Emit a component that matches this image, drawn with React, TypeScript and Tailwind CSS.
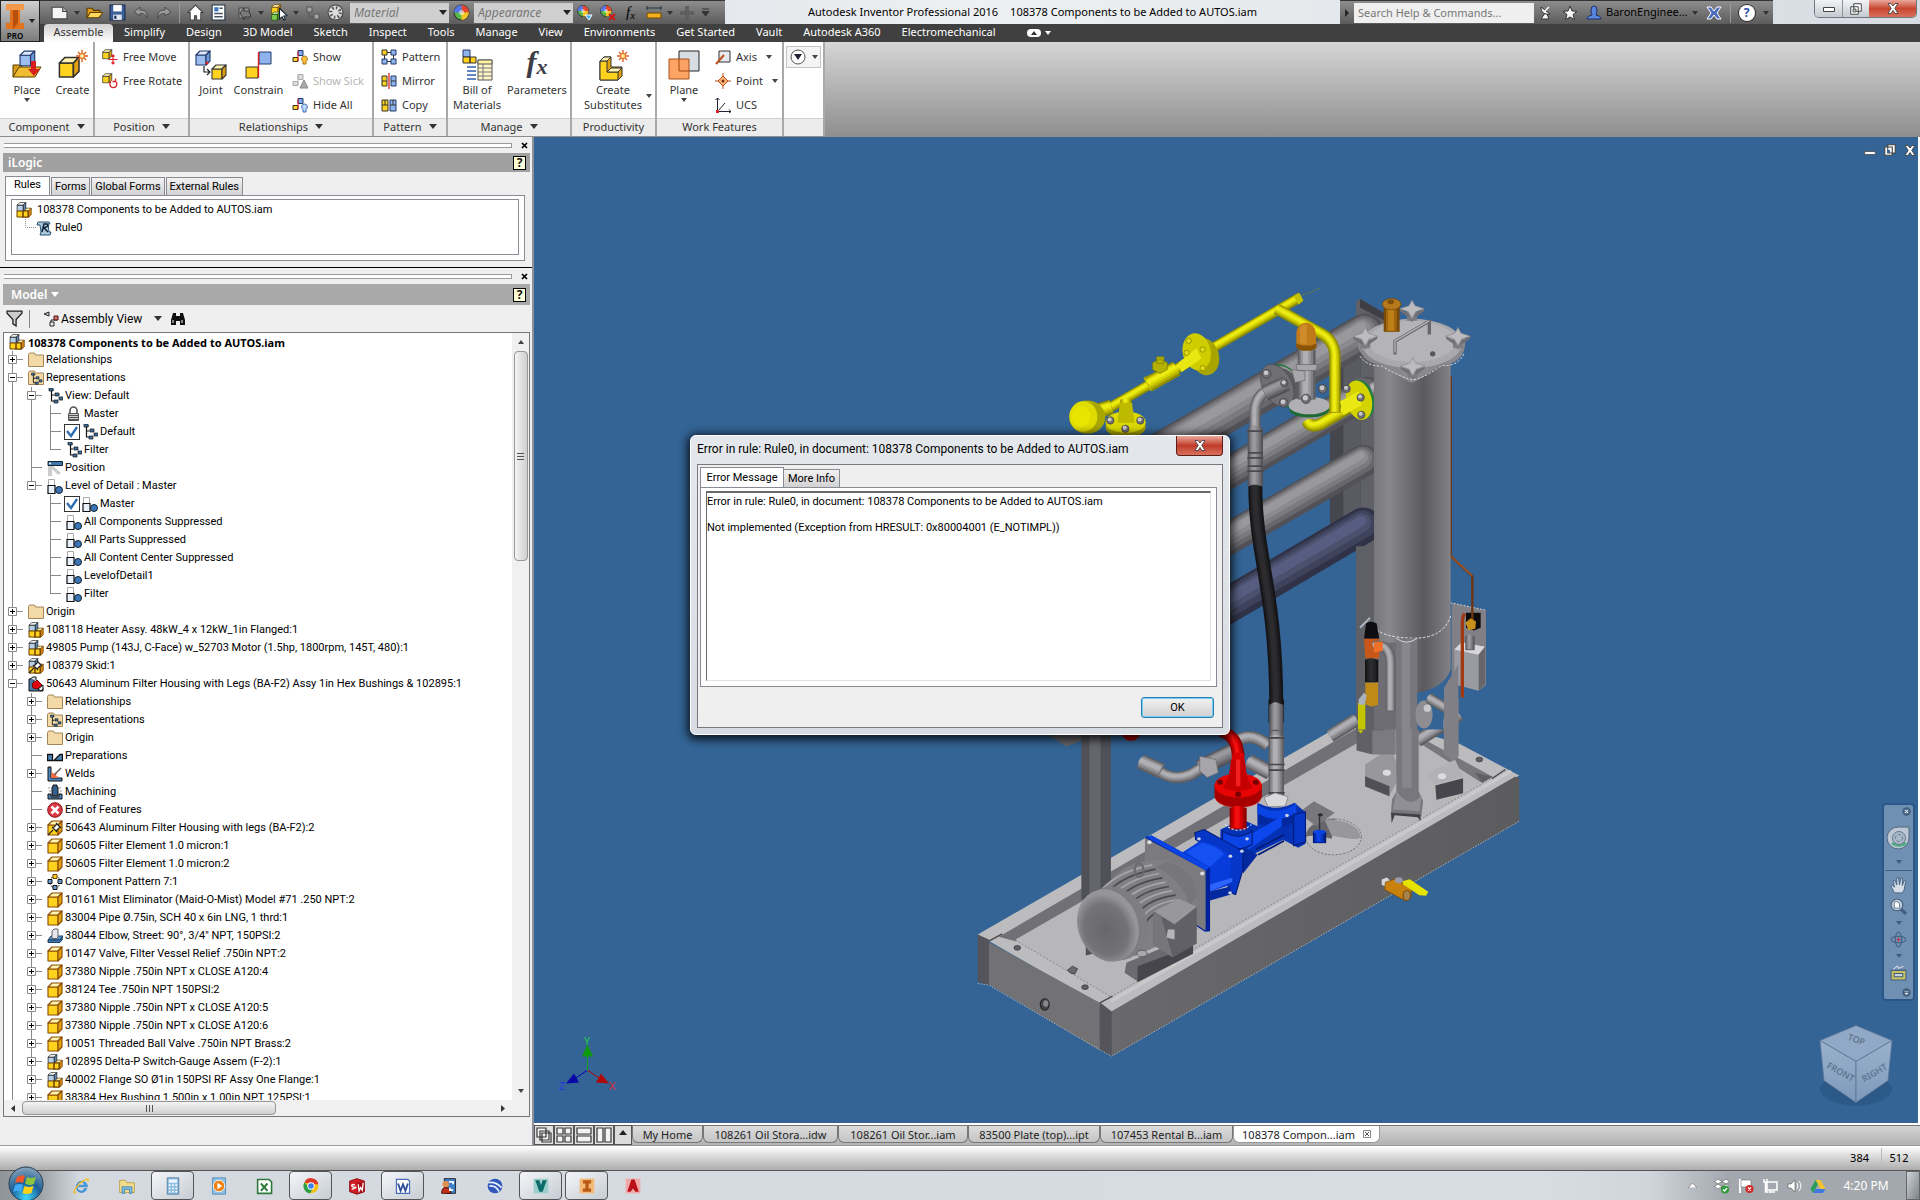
import React from "react";

type Kids = { children?: React.ReactNode };

/* ---------- small drawing helpers ---------- */

function Ic({ s = 16, h, vb, children }: { s?: number; h?: number; vb?: string } & Kids) {
  return (
    <svg width={s} height={h ?? s} viewBox={vb ?? "0 0 16 16"} className="shrink-0" aria-hidden="true">
      {children}
    </svg>
  );
}

const Caret = ({ c = "#444" }: { c?: string }) => (
  <Ic s={6} h={4} vb="0 0 6 4"><path d="M0 0h6L3 4z" fill={c} /></Ic>
);
const BigCaret = ({ c = "#333" }: { c?: string }) => (
  <Ic s={8} h={5} vb="0 0 8 5"><path d="M0 0h8L4 5z" fill={c} /></Ic>
);

function Cube({ x = 0, y = 0, k = 1, f = "#ffd21e", t = "#fff3b0", r = "#e0a010", o = "#6b3f00" }) {
  return (
    <g transform={`translate(${x} ${y}) scale(${k})`} stroke={o} strokeWidth={1.1} strokeLinejoin="round">
      <path d="M1 5h10v10H1z" fill={f} />
      <path d="M1 5l4-4h10l-4 4z" fill={t} />
      <path d="M11 5l4-4v10l-4 4z" fill={r} />
    </g>
  );
}
const BLUE = { f: "#9dbdf0", t: "#dbe8fb", r: "#6f96d6", o: "#223a6b" };

const PartIcon = () => <Ic><Cube o="#8a4a00" /></Ic>;
const AsmArt = () => (
  <>
    <Cube x={5.5} y={5.5} k={0.65} f="#ffc41e" r="#d98a10" />
    <Cube x={0.5} y={0} k={0.62} f="#b7cfe6" t="#fff" r="#5d88b5" o="#111" />
    <path d="M1 9h6v6H1zM7 9h5v6H7z" fill="#ffd21e" stroke="#6b3f00" />
  </>
);
const AsmIcon = () => <Ic><AsmArt /></Ic>;
const Pin = () => <path d="M1 15l5-5M5 7l5 5M6 8l4-4 3 3-4 4zM9 3l5 5" stroke="#222" fill="#fff" strokeWidth={1.1} />;
const AsmPinIcon = () => <Ic><AsmArt /><Pin /></Ic>;
const PartPinIcon = () => <Ic><Cube o="#8a4a00" /><Pin /></Ic>;
const WeldAsmIcon = () => (
  <Ic>
    <path d="M1 3h5v9h9v3H1z" fill="#4d7ba8" stroke="#111" />
    <path d="M2 3l3-2h3v3" fill="#dce8f4" stroke="#111" />
    <path d="M4 8l5-4 5 5-4 4-5-1z" fill="#e00010" stroke="#700" />
    <path d="M10 13l5-4v4l-2 2z" fill="#e8eef4" stroke="#111" />
  </Ic>
);
const FolderArt = () => (
  <path d="M.5 14.5v-12l1-1.500h5l1 2h8v11.500z" fill="#f3d9a6" stroke="#a3855a" strokeLinejoin="round" />
);
const RepArt = () => (
  <>
    <path d="M3 2h4M4.500 2v11h3M4.500 7h3" stroke="#111" fill="none" strokeWidth={1.2} />
    <path d="M2 0h4v3H2zM8 5h4v3H8zM12 9h4v3h-4zM7 12h4v3H7z" fill="#3f6f9f" stroke="#111" strokeWidth={0.7} />
  </>
);
const FolderIcon = () => <Ic><FolderArt /></Ic>;
const RepFolderIcon = () => <Ic><FolderArt /><g transform="translate(2 3) scale(.75)"><RepArt /></g></Ic>;
const ViewIcon = () => <Ic><RepArt /></Ic>;
const LockIcon = () => (
  <Ic>
    <path d="M4 8V4.500a3.500 3.500 0 0 1 7 0V8" fill="none" stroke="#555" strokeWidth={1.6} />
    <path d="M2.500 7.500h10v7h-10zM3 9.500h9M3 11.500h9M3 13.500h9" fill="#ccc" stroke="#555" />
  </Ic>
);
const PositionIcon = () => (
  <Ic>
    <path d="M1 5h4v11H1zM5 5l9 8-3 2-8-8z" fill="#ccc" />
    <path d="M1 1.500h14.500v4H1z" fill="#3f77ad" stroke="#123" />
    <circle cx="3" cy="3.500" r="1" fill="#fff" />
  </Ic>
);
const LodIcon = () => (
  <Ic>
    <path d="M1.500 1.500h6v6h-6z" fill="#fff" stroke="#aaa" />
    <path d="M1 7.500h7v8H1z" fill="#e9f1fa" stroke="#111" strokeWidth={1.2} />
    <circle cx="12" cy="12" r="3.500" fill="#3c76b4" stroke="#123" />
  </Ic>
);
const PrepIcon = () => <Ic><path d="M.5 6.500h5v6h-5zM7 12.500l6-6h2.500v6z" fill="#4d86bd" stroke="#111" strokeWidth={1.3} /></Ic>;
const WeldsIcon = () => (
  <Ic>
    <path d="M1 1h3v11h11v3H1z" fill="#4d86bd" stroke="#111" />
    <path d="M4 12l1-6 2 2 3-1-1 3 3 1-4 1z" fill="#ff6a3c" />
    <path d="M7 9l7-7" stroke="#666" strokeWidth={1.6} />
  </Ic>
);
const MachIcon = () => (
  <Ic>
    <path d="M1 10h3v3h8v-3h3v5H1z" fill="#4d86bd" stroke="#111" />
    <path d="M6 1h4v2h1v9H5V3h1z" fill="#345f8a" stroke="#111" />
    <path d="M1 4h2M2 7h2M12 4h2M13 7h2" stroke="#999" />
  </Ic>
);
const EndIcon = () => (
  <Ic>
    <circle cx="8" cy="8" r="7.300" fill="#dc3a44" stroke="#8a1018" />
    <path d="M4.500 4.500l7 7M11.500 4.500l-7 7" stroke="#fff" strokeWidth={2.6} />
  </Ic>
);
const PatternIcon = () => (
  <Ic>
    <circle cx="8" cy="8" r="5.500" fill="none" stroke="#111" strokeDasharray="2 1.500" />
    <path d="M1 5.500h4v4H1zM11 5.500h4v4h-4zM6 11.500h4v4H6z" fill="#6c9bd0" stroke="#111" />
    <path d="M6 .5h4v4H6z" fill="#ffd21e" stroke="#6b3f00" />
  </Ic>
);
const ElbowIcon = () => (
  <Ic>
    <path d="M1 12l3-4h12l-3 4z" fill="#5b93c8" stroke="#1d4568" />
    <path d="M1 12v2.500h12l3-4V8l-3 4z" fill="#3f78b0" stroke="#1d4568" />
    <path d="M5 3l2-2h4v8l-1 1.500H5z" fill="#e3e7ec" stroke="#666" />
  </Ic>
);
const RuleIcon = () => (
  <Ic>
    <path d="M2 2h11l1 2h-2l1 8h2l-1 3H4l1-3L4 5H1z" fill="#a9c8dd" stroke="#2c5570" />
    <path d="M6 12l2-8h3l1 2-4 2 4 4" fill="none" stroke="#123" strokeWidth={1.5} />
  </Ic>
);

/* ---------- model browser tree ---------- */

type Row = [guides: string, icon: () => React.JSX.Element, label: string, checked?: boolean];

const TREE: Row[] = [
  ["+", FolderIcon, "Relationships"],
  ["-", RepFolderIcon, "Representations"],
  ["v-", ViewIcon, "View: Default"],
  ["vvt", LockIcon, "Master"],
  ["vvt", ViewIcon, "Default", true],
  ["vvl", ViewIcon, "Filter"],
  ["vt", PositionIcon, "Position"],
  ["ve", LodIcon, "Level of Detail : Master"],
  ["v t", LodIcon, "Master", true],
  ["v t", LodIcon, "All Components Suppressed"],
  ["v t", LodIcon, "All Parts Suppressed"],
  ["v t", LodIcon, "All Content Center Suppressed"],
  ["v t", LodIcon, "LevelofDetail1"],
  ["v l", LodIcon, "Filter"],
  ["+", FolderIcon, "Origin"],
  ["+", AsmIcon, "108118 Heater Assy. 48kW_4 x 12kW_1in Flanged:1"],
  ["+", AsmIcon, "49805 Pump (143J, C-Face) w_52703 Motor (1.5hp, 1800rpm, 145T, 480):1"],
  ["+", AsmPinIcon, "108379 Skid:1"],
  ["-", WeldAsmIcon, "50643 Aluminum Filter Housing with Legs (BA-F2) Assy 1in Hex Bushings & 102895:1"],
  ["v+", FolderIcon, "Relationships"],
  ["v+", RepFolderIcon, "Representations"],
  ["v+", FolderIcon, "Origin"],
  ["vt", PrepIcon, "Preparations"],
  ["v+", WeldsIcon, "Welds"],
  ["vt", MachIcon, "Machining"],
  ["vt", EndIcon, "End of Features"],
  ["v+", PartPinIcon, "50643 Aluminum Filter Housing with legs (BA-F2):2"],
  ["v+", PartIcon, "50605 Filter Element 1.0 micron:1"],
  ["v+", PartIcon, "50605 Filter Element 1.0 micron:2"],
  ["v+", PatternIcon, "Component Pattern 7:1"],
  ["v+", PartIcon, "10161 Mist Eliminator (Maid-O-Mist) Model #71 .250 NPT:2"],
  ["v+", PartIcon, "83004 Pipe Ø.75in, SCH 40 x 6in LNG, 1 thrd:1"],
  ["v+", ElbowIcon, "38044 Elbow, Street: 90°, 3/4\" NPT, 150PSI:2"],
  ["v+", PartIcon, "10147 Valve, Filter Vessel Relief .750in NPT:2"],
  ["v+", PartIcon, "37380 Nipple .750in NPT x CLOSE A120:4"],
  ["v+", PartIcon, "38124 Tee .750in NPT 150PSI:2"],
  ["v+", PartIcon, "37380 Nipple .750in NPT x CLOSE A120:5"],
  ["v+", PartIcon, "37380 Nipple .750in NPT x CLOSE A120:6"],
  ["v+", PartIcon, "10051 Threaded Ball Valve .750in NPT Brass:2"],
  ["v+", AsmIcon, "102895 Delta-P Switch-Gauge Assem (F-2):1"],
  ["v+", AsmIcon, "40002 Flange SO Ø1in 150PSI RF Assy One Flange:1"],
  ["v+", PartIcon, "38384 Hex Bushing 1.500in x 1.00in NPT 125PSI:1"],
];

function Guide({ k }: { k: string }) {
  const box = k === "+" || k === "-" || k === "e";
  const half = k === "l" || k === "e";
  return (
    <Ic s={19} h={18} vb="0 0 19 18">
      <g stroke="#8a8a8a" fill="none">
        {k !== " " && <path d={half ? "M8.500 0v9" : "M8.500 0v18"} />}
        {k !== " " && k !== "v" && <path d="M8.500 8.500H19" />}
        {box && <path d="M4.500 4.500h8v8h-8z" fill="#fff" />}
      </g>
      {box && <path d={k === "+" ? "M6 8.500h5M8.500 6v5" : "M6 8.500h5"} stroke="#000" />}
    </Ic>
  );
}

function TreeRow({ row }: { row: Row }) {
  const [guides, Icon, label, checked] = row;
  return (
    <li className="flex h-[18px] items-center whitespace-nowrap">
      {guides.split("").map((k, i) => <Guide key={i} k={k} />)}
      {checked ? (
        <label className="ml-[3px] flex items-center gap-0.5">
          <span className="relative flex">
            <input type="checkbox" defaultChecked className="peer size-4 appearance-none border border-[#333] bg-white" />
            <svg viewBox="0 0 16 16" className="pointer-events-none absolute inset-0 hidden size-4 peer-checked:block" aria-hidden="true">
              <path d="M3 7l4 5 6-9" fill="none" stroke="#2f6db5" strokeWidth={2.4} />
            </svg>
          </span>
          <Icon />
          {label}
        </label>
      ) : (
        <span className="ml-[5px] flex items-center gap-0.5"><Icon />{label}</span>
      )}
    </li>
  );
}

/* ---------- title bar ---------- */

function Ball({ x = 8, y = 8, r = 7 }) {
  return (
    <g transform={`translate(${x} ${y})`}>
      <circle r={r} fill="#58b947" stroke="#333" />
      <path d={`M0 0V${-r}A${r} ${r} 0 0 1 ${r} 0z`} fill="#e8452f" />
      <path d={`M0 0H${r}A${r} ${r} 0 0 1 0 ${r}z`} fill="#f3c623" />
      <path d={`M0 0V${-r}A${r} ${r} 0 0 0 ${-r} 0z`} fill="#5577e8" />
      <circle r={r * 0.35} fill="#fff" opacity=".55" />
    </g>
  );
}

function QBtn({ label, w = "w-[23px]", children }: { label: string; w?: string } & Kids) {
  return <button aria-label={label} className={`flex h-full shrink-0 items-center justify-center ${w}`}>{children}</button>;
}

function Combo({ label }: { label: string }) {
  return (
    <div className="relative flex h-5 w-[99px] shrink-0">
      <select aria-label={label} className="h-full w-full appearance-none bg-[#cfcfcf] pl-1 font-['Noto_Sans'] text-[12px] text-[#777] italic">
        <option>{label}</option>
      </select>
      <span className="pointer-events-none absolute inset-y-0 right-0.5 flex items-center"><BigCaret c="#222" /></span>
    </div>
  );
}

function TitleBar() {
  return (
    <header className="flex h-6 items-stretch bg-gradient-to-r from-[#cdd3dc] via-[#eef0f2] to-[#d6dce2]">
      <div className="flex w-[685px] shrink-0 items-center border-t border-[#333] bg-gradient-to-b from-[#8d8d8d] to-[#5c5c5c] pl-2">
        <QBtn label="New"><Ic s={17}><path d="M1 3h10l4 4v7H1z" fill="#f4f4f4" stroke="#444" /><path d="M11 3v4h4" fill="#bbb" stroke="#444" /></Ic></QBtn>
        <QBtn label="New options" w="w-[12px]"><Caret c="#333" /></QBtn>
        <QBtn label="Open"><Ic s={17}><path d="M1 13V4h5l1 2h6v2" fill="#d99a1a" stroke="#5d3d00" /><path d="M1 13l3-5h12l-4 5z" fill="#ffd75a" stroke="#5d3d00" /></Ic></QBtn>
        <QBtn label="Save"><Ic s={17}><path d="M1 1h14v14H1z" fill="#3c5f99" stroke="#152a50" /><path d="M4 1h8v6H4z" fill="#fff" /><path d="M4 10h8v5H4z" fill="#dfe6f0" /><path d="M5 11h2v3H5z" fill="#152a50" /></Ic></QBtn>
        <QBtn label="Undo"><Ic><path d="M7 2L1 7l6 4V8.500c4 0 6 1 7 4.500 1-6-2-8-7-8z" fill="#9a9a9a" stroke="#4a4a4a" /></Ic></QBtn>
        <QBtn label="Redo"><Ic><path d="M9 2l6 5-6 4V8.500c-4 0-6 1-7 4.500-1-6 2-8 7-8z" fill="#9a9a9a" stroke="#4a4a4a" /></Ic></QBtn>
        <span className="mx-1 h-5 w-px bg-[#999]" />
        <QBtn label="Home"><Ic s={17}><path d="M8 1l7 7h-2v7H9v-4H7v4H3V8H1z" fill="#fff" stroke="#444" /></Ic></QBtn>
        <QBtn label="iProperties"><Ic s={17}><path d="M2 1h12v14H2z" fill="#fff" stroke="#234" /><path d="M4 3h4v4H4z" fill="#3f77c0" /><path d="M4 9h8M4 12h8M9 4h3" stroke="#456" strokeWidth={1.4} /></Ic></QBtn>
        <span className="w-[3px]" />
        <QBtn label="Update"><Ic><path d="M2 3h10v10H2z" fill="#9b9b9b" stroke="#444" /><path d="M3 8l4-5v3h5l2 6h-7v3z" fill="#7b7b7b" stroke="#3a3a3a" /></Ic></QBtn>
        <QBtn label="Update options" w="w-[10px]"><Caret c="#333" /></QBtn>
        <span className="w-0.5" />
        <QBtn label="Select"><Ic s={17}><Cube k={0.6} /><Cube x={0} y={7} k={0.55} f="#7ec850" t="#c8efac" r="#4d9628" o="#1c4a08" /><path d="M8 4l7 7-3 .3 1.500 3-1.500.7-1.500-3L8 14z" fill="#fff" stroke="#123" /></Ic></QBtn>
        <QBtn label="Select options" w="w-[10px]"><Caret c="#333" /></QBtn>
        <QBtn label="Switch"><Ic><path d="M2 2h5v5H2zM9 9h5v5H9z" fill="#a5a5a5" stroke="#555" /><path d="M4 8v4h4" stroke="#555" fill="none" /></Ic></QBtn>
        <QBtn label="Render"><Ic s={17}><circle cx="8" cy="8" r="7" fill="#ddd" stroke="#444" /><circle cx="8" cy="8" r="4.500" fill="none" stroke="#555" strokeWidth={3} strokeDasharray="1.500 2" /></Ic></QBtn>
        <span className="w-[3px]" />
        <Combo label="Material" />
        <QBtn label="Appearance colour wheel" w="w-[25px]"><Ic s={17}><Ball /></Ic></QBtn>
        <Combo label="Appearance" />
        <QBtn label="Adjust"><Ic><Ball x={6} y={6} r={5.5} /><path d="M8 10h7l-3 5z" fill="#3fb0f0" stroke="#fff" /></Ic></QBtn>
        <QBtn label="Clear"><Ic><Ball x={6} y={6} r={5.5} /><path d="M9 9l6 6M15 9l-6 6" stroke="#d01818" strokeWidth={2} /></Ic></QBtn>
        <QBtn label="Parameters"><span className="flex items-center font-['Liberation_Serif'] text-[15px] leading-none text-black italic">f<span className="pt-1.5 text-[11px]">x</span></span></QBtn>
        <QBtn label="Measure"><Ic><path d="M1 3h14M1 1v4M15 1v4" stroke="#234" /><path d="M1 8h14v5H1z" fill="#f0b020" stroke="#704800" /></Ic></QBtn>
        <QBtn label="Measure options" w="w-[10px]"><Caret c="#333" /></QBtn>
        <QBtn label="Add"><Ic><path d="M6 1h4v5h5v4h-5v5H6v-5H1V6h5z" fill="#5f5f5f" /></Ic></QBtn>
        <QBtn label="Customize" w="w-[14px]"><Ic s={9} h={9} vb="0 0 9 9"><path d="M1 1h7M1 3.500h7L4.500 8z" fill="#333" stroke="#333" /></Ic></QBtn>
      </div>
      <h1 className="flex min-w-0 flex-1 items-center justify-center gap-3 overflow-hidden text-[11px] font-normal whitespace-nowrap text-black">
        <span>Autodesk Inventor Professional 2016</span>
        <span>108378 Components to be Added to AUTOS.iam</span>
      </h1>
      <div className="flex w-[433px] shrink-0 items-center border-t border-[#333] bg-gradient-to-b from-[#8d8d8d] to-[#5c5c5c]">
        <QBtn label="Expand search" w="w-[14px]"><Ic s={4} h={8} vb="0 0 4 8"><path d="M0 0l4 4-4 4z" fill="#222" /></Ic></QBtn>
        <input aria-label="Search Help and Commands" placeholder="Search Help & Commands..." className="h-5 w-[180px] bg-[#efefef] px-1 text-[11px] placeholder:text-[#777]" />
        <QBtn label="Communication Center" w="w-[24px]"><Ic><path d="M3 2c0 5 3 8 9 7zM7 8l-4 6h8l-2-5" fill="#f6f6f6" stroke="#333" /><path d="M7 6l4-4" stroke="#fff" strokeWidth={1.5} /></Ic></QBtn>
        <QBtn label="Favorites"><Ic><path d="M8 1l2 5 5 .3-4 3.300 1.500 5L8 12l-4.500 2.600L5 9.600 1 6.300 6 6z" fill="#f6f6f6" stroke="#333" /></Ic></QBtn>
        <button className="flex items-center gap-1 pl-[5px] text-[11px] text-black">
          <Ic><path d="M5 5a3 4 0 0 1 6 0c0 3-1 4-1 5 3 1 5 1.500 5 4H1c0-2.500 2-3 5-4 0-1-1-2-1-5z" fill="#5b86e0" stroke="#1b2f66" /></Ic>
          BaronEnginee...
          <Caret c="#333" />
        </button>
        <QBtn label="Exchange" w="w-[32px]"><Ic><path d="M1 2h4l3 4 3-4h4l-4 6 4 6h-4l-3-4-3 4H1l4-6z" fill="#4c6cc0" stroke="#fff" /></Ic></QBtn>
        <span className="h-5 w-px bg-[#999]" />
        <QBtn label="Help" w="w-[32px]">
          <span className="flex size-4 items-center justify-center rounded-full bg-white text-[12px] leading-none font-bold text-[#2a4fa8] ring-1 ring-[#333]">?</span>
        </QBtn>
        <Caret c="#333" />
      </div>
      <div className="flex shrink-0 items-start pr-[3px] pl-[41px]">
        <div className="flex h-[18px] overflow-hidden rounded-b-[5px] border border-t-0 border-[#6f7780]">
          <button aria-label="Minimize" className="flex w-7 items-center justify-center border-r border-[#8c949c] bg-gradient-to-b from-[#f2f4f6] to-[#c4cad1]"><Ic s={12} h={6} vb="0 0 12 6"><path d="M.5 1.500h11v4H.5z" fill="#fff" stroke="#444" /></Ic></button>
          <button aria-label="Restore" className="flex w-[26px] items-center justify-center bg-gradient-to-b from-[#f2f4f6] to-[#c4cad1]"><Ic s={12}><path d="M5 1h10v10H5zM1 5h10v10H1z" fill="#fff" stroke="#444" strokeWidth={1.3} /><path d="M4 8h4v4H4z" fill="#bbb" stroke="#444" /></Ic></button>
          <button aria-label="Close" className="flex w-[47px] items-center justify-center bg-gradient-to-b from-[#e9a79c] via-[#c8452f] to-[#d8705c]"><CloseX /></button>
        </div>
      </div>
    </header>
  );
}

const CloseX = () => (
  <Ic s={12} h={11} vb="0 0 12 11"><path d="M1 .5h3l2 2.500L8 .5h3L7.800 5.300 11 10.500H8L6 7.500l-2 3H1l3.200-5.200z" fill="#fff" stroke="#444" strokeWidth={0.9} /></Ic>
);

/* ---------- ribbon ---------- */

const TABS = ["Simplify", "Design", "3D Model", "Sketch", "Inspect", "Tools", "Manage", "View", "Environments", "Get Started", "Vault", "Autodesk A360", "Electromechanical"];

function Panel({ title, w, menu = true, children }: { title: string; w: string; menu?: boolean } & Kids) {
  return (
    <section className={`flex shrink-0 flex-col border-r-2 border-[#a9a9a9] bg-white ${w}`}>
      <div className="flex flex-1">{children}</div>
      <button className="flex h-[18px] items-center justify-center gap-[7px] border-t border-[#cfcfcf] bg-[#ececec] pb-0.5 text-[11px] leading-none text-[#333]">
        {title}
        {menu && <BigCaret />}
      </button>
    </section>
  );
}

function Big({ lines, icon, caret, w }: { lines: string[]; icon: React.ReactNode; caret?: boolean; w: string }) {
  return (
    <button className={`flex shrink-0 flex-col items-center pt-1.5 text-[11px] leading-[15px] whitespace-nowrap text-[#333] ${w}`}>
      <span className="flex h-[34px] items-center">{icon}</span>
      {lines.map((l) => <span key={l}>{l}</span>)}
      {caret && <span className="flex h-1.5 items-center"><Caret /></span>}
    </button>
  );
}

function Small({ label, icon, off, caret }: { label: string; icon: React.ReactNode; off?: boolean; caret?: boolean }) {
  return (
    <button disabled={off} className="flex h-6 items-center gap-[5px] text-[11px] whitespace-nowrap text-[#333] disabled:text-[#b5b5b5]">
      {icon}
      {label}
      {caret && <span className="pl-1"><Caret /></span>}
    </button>
  );
}
const Stack = ({ children }: Kids) => <div className="flex flex-col pt-[3px] pl-[7px]">{children}</div>;

const Spark = ({ x, y }: { x: number; y: number }) => (
  <g transform={`translate(${x} ${y})`}>
    <path d="M0-6V6M-6 0H6M-4-4l8 8M4-4l-8 8" stroke="#e0601a" strokeWidth={1.4} />
    <circle r="2.500" fill="#fff3a0" stroke="#e0601a" />
  </g>
);
const Pair = ({ off }: { off?: boolean }) => (
  <>
    <path d="M6 1.500h5v5H6z" fill={off ? "#ddd" : "#7fa8e8"} stroke={off ? "#aaa" : "#223a6b"} />
    <path d="M1 8.500h5v4H1z" fill={off ? "#ddd" : "#ffd21e"} stroke={off ? "#aaa" : "#333"} />
    <path d="M6 2v10" stroke={off ? "#bbb" : "#d22"} />
  </>
);
const Bulb = ({ c, o }: { c: string; o: string }) => <path d="M12.500 7a3 3 0 0 0-1.500 5.500V15h3v-2.500A3 3 0 0 0 12.500 7z" fill={c} stroke={o} />;

function Ribbon() {
  return (
    <div className="flex h-[95px] border-b border-[#8d8d8d] bg-gradient-to-b from-[#d6d6d6] to-[#8f8f8f]">
      <Panel title="Component" w="w-[95px]">
        <Big w="w-[54px]" lines={["Place"]} caret icon={<Ic s={32} vb="0 0 32 32"><path d="M2 28V16h8l2 3" fill="#d99a1a" stroke="#5d3d00" /><Cube x={8} y={1} k={1.05} {...BLUE} /><path d="M2 28l6-10h22l-6 10z" fill="#f0bd32" stroke="#5d3d00" /><path d="M20 12h5v8h4l-6 7-6-7h3z" fill="#d81e1e" /></Ic>} />
        <Big w="w-[37px]" lines={["Create"]} icon={<Ic s={32} vb="0 0 32 32"><Cube x={1} y={7} k={1.4} o="#333" /><Spark x={25} y={7} /></Ic>} />
      </Panel>
      <Panel title="Position" w="w-[95px]">
        <Stack>
          <Small label="Free Move" icon={<Ic><Cube k={0.65} o="#333" /><path d="M11 6v9M6.500 10.500h9M9.500 7.500L11 6l1.500 1.500M9.500 13.500L11 15l1.500-1.500" fill="none" stroke="#d22" strokeWidth={1.2} /></Ic>} />
          <Small label="Free Rotate" icon={<Ic><Cube k={0.65} o="#333" /><path d="M9 8.500a3.500 3.500 0 1 0 4-.5M13.500 5.500V8.500h-3" fill="none" stroke="#d22" strokeWidth={1.3} /></Ic>} />
        </Stack>
      </Panel>
      <Panel title="Relationships" w="w-[184px]">
        <Big w="w-[42px]" lines={["Joint"]} icon={<Ic s={32} vb="0 0 32 32"><Cube x={0} y={1} {...BLUE} /><Cube x={16} y={15} o="#333" /><path d="M9 17v6h5M12 20l3 3-3 3" fill="none" stroke="#222" strokeWidth={1.2} /><circle cx="12" cy="14" r="1.500" fill="#d22" /></Ic>} />
        <Big w="w-[53px]" lines={["Constrain"]} icon={<Ic s={32} vb="0 0 32 32"><path d="M16 3h12v12H16z" fill="#8fb3ec" stroke="#223a6b" /><path d="M3 18h12v11H3z" fill="#ffd21e" stroke="#333" /><path d="M15.500 3v26" stroke="#d22" strokeWidth={1.4} /></Ic>} />
        <Stack>
          <Small label="Show" icon={<Ic><Pair /><Bulb c="#ffc23a" o="#a86a10" /></Ic>} />
          <Small label="Show Sick" off icon={<Ic><Pair off /><path d="M12 7l4 8H8z" fill="#aaa" stroke="#888" /></Ic>} />
          <Small label="Hide All" icon={<Ic><Pair /><Bulb c="#bcd8ff" o="#3a6ab0" /></Ic>} />
        </Stack>
      </Panel>
      <Panel title="Pattern" w="w-[74px]">
        <Stack>
          <Small label="Pattern" icon={<Ic><path d="M1 1h5v5H1z" fill="#ffd21e" stroke="#333" /><path d="M10 1h5v5h-5zM1 10h5v5H1zM10 10h5v5h-5z" fill="#8fb3ec" stroke="#223a6b" /><path d="M6 3.500h4M3.500 6v4M12.500 6v4M6 12.500h4" stroke="#333" /></Ic>} />
          <Small label="Mirror" icon={<Ic><path d="M1 3h5v10H1z" fill="#ffd21e" stroke="#333" /><path d="M10 3h5v10h-5z" fill="#8fb3ec" stroke="#223a6b" /><path d="M8 0v16" stroke="#d22" strokeWidth={1.3} /><path d="M1 8h5M10 8h5" stroke="#333" /></Ic>} />
          <Small label="Copy" icon={<Ic><path d="M1 3h6v11H1z" fill="#ffd21e" stroke="#333" /><path d="M9 3h6v11H9z" fill="#8fb3ec" stroke="#223a6b" /><path d="M1 8h6M9 8h6M4 3v5M12 3v5" stroke="#333" /></Ic>} />
        </Stack>
      </Panel>
      <Panel title="Manage" w="w-[124px]">
        <Big w="w-[58px]" lines={["Bill of", "Materials"]} icon={<Ic s={32} vb="0 0 32 32"><path d="M2 1h7v7H2z" fill="#8fb3ec" stroke="#223a6b" /><path d="M2 8h7v6H2zM9 8h6v6H9z" fill="#ffd21e" stroke="#333" /><path d="M17 11h14v20H17z" fill="#fff6c8" stroke="#555" /><path d="M17 11h14v4H17z" fill="#fff3a0" stroke="#555" /><path d="M17 19h14M17 23h14M17 27h14M22 15v16" stroke="#777" /><path d="M6 18h9M6 22h9M6 26h9M6 30h9" stroke="#345fae" strokeWidth={1.6} /></Ic>} />
        <Big w="w-[62px]" lines={["Parameters"]} icon={<span className="flex h-8 items-start font-['Liberation_Serif'] text-[30px] leading-[26px] font-bold text-[#3d3d46] italic">f<span className="pt-2 text-[22px] leading-[20px]">x</span></span>} />
      </Panel>
      <Panel title="Productivity" menu={false} w="w-[85px]">
        <Big w="w-[82px]" lines={["Create", "Substitutes"]} icon={<Ic s={32} vb="0 0 32 32"><path d="M3 12v19h18l4-4v-9H14V8H7z" fill="#e0a010" stroke="#333" /><path d="M3 12h7v11h11v8H3z" fill="#ffd21e" stroke="#333" /><path d="M3 12l4-4h7l-4 4zM10 23l4-4h11l-4 4z" fill="#fff3b0" stroke="#333" /><Spark x={26} y={7} /></Ic>} />
        <span className="-ml-2 flex items-center pt-8"><Caret /></span>
      </Panel>
      <Panel title="Work Features" menu={false} w="w-[127px]">
        <Big w="w-[54px]" lines={["Plane"]} caret icon={<Ic s={32} vb="0 0 32 32"><path d="M11 2h20v20H11z" fill="#d8dde4" stroke="#222" /><path d="M1 10h20v20H1z" fill="#ff9a54" fillOpacity=".9" stroke="#a8501a" /><path d="M11 10v12h10" fill="none" stroke="#a8501a" /></Ic>} />
        <div className="flex flex-col pt-[3px] pl-1">
          <Small label="Axis" caret icon={<Ic><path d="M4 2h11v11H4z" fill="#e6eaf0" stroke="#333" /><path d="M1 15L9 6" stroke="#b85018" strokeWidth={2} /></Ic>} />
          <Small label="Point" caret icon={<Ic><path d="M8 0v16M0 8h16" stroke="#b85018" /><path d="M8 3l5 5-5 5-5-5z" fill="#ffb27a" stroke="#b85018" /><circle cx="8" cy="8" r="1.500" fill="#803008" /></Ic>} />
          <Small label="UCS" icon={<Ic><path d="M2.500 15V1M2 14.500h14M3 14l7-8M.5 3l2-2 2 2M14 12.500l2 2-2 1.500" fill="none" stroke="#223" /><path d="M1 13h3v3H1z" fill="#d22" /></Ic>} />
        </div>
      </Panel>
      <Panel title="" menu={false} w="w-[41px]">
        <button aria-label="Panel options" className="mx-auto mt-1 flex h-[22px] w-[35px] items-center justify-center gap-1.5 border border-[#c4c4c4] bg-[#f4f4f4]">
          <Ic><circle cx="8" cy="8" r="7" fill="#fff" stroke="#555" /><path d="M4 5h8l-4 6z" fill="#223" /></Ic>
          <Caret />
        </button>
      </Panel>
    </div>
  );
}

function Top() {
  return (
    <div className="relative shrink-0 font-['Noto_Sans',sans-serif]">
      <div className="flex">
        <div className="flex w-10 shrink-0 bg-[#404040]">
          <button aria-label="Application menu" className="flex w-full border border-[#222] bg-gradient-to-b from-[#cfcfcf] to-[#7c7c7c]">
            <span className="flex flex-1 flex-col items-center justify-end text-[8px] leading-[11px] font-semibold text-black">
              <Ic s={22} h={27} vb="0 0 22 27"><path d="M2 1h18v6h-4v13h4v6H2v-6h4V7H2z" fill="#e2721c" /><path d="M2 1h18v6h-6L2 7z" fill="#f39a4a" /><path d="M9 7h5v13l-5 6z" fill="#b94f0c" /></Ic>
              PRO
            </span>
            <span className="flex h-full w-2.5 items-center"><Caret c="#222" /></span>
          </button>
        </div>
        <div className="min-w-0 flex-1">
          <TitleBar />
          <nav className="flex h-[18px] items-stretch gap-px bg-[#404040] pl-1 text-[11px] leading-[15px] text-white">
            <button className="flex w-[69px] justify-center rounded-t-sm bg-gradient-to-b from-[#d0d0d0] to-white text-[#333]">Assemble</button>
            {TABS.map((t) => <button key={t} className="flex px-[10px] whitespace-nowrap">{t}</button>)}
            <button aria-label="Minimize ribbon" className="ml-5 flex items-center gap-1"><span className="flex h-2 w-3.5 items-center justify-center rounded-sm bg-white"><Ic s={6} h={4} vb="0 0 6 4"><path d="M0 4h6L3 0z" fill="#333" /></Ic></span><Caret c="#fff" /></button>
          </nav>
        </div>
      </div>
      <Ribbon />
    </div>
  );
}

/* ---------- left dock ---------- */

function Grip({ label }: { label: string }) {
  return (
    <div className="flex h-4 items-center gap-1.5 pr-0.5 pl-1">
      <span className="h-[5px] flex-1 border-y border-r border-[#9a9a9a] bg-white" />
      <button aria-label={label} className="flex size-3 items-center justify-center"><Ic s={7} vb="0 0 7 7"><path d="M1 1l5 5M6 1L1 6" stroke="#000" strokeWidth={1.7} /></Ic></button>
    </div>
  );
}
const HelpTip = ({ label }: { label: string }) => (
  <button aria-label={label} className="flex h-[14px] w-[13px] items-center justify-center border border-black bg-[#ffffd8] text-[12px] leading-none font-bold text-[#111]">?</button>
);
function BrowserTab({ label }: { label: string }) {
  return <button className="h-[18px] border border-b-0 border-[#8b8b93] bg-gradient-to-b from-[#f2f2f2] to-[#d2d2d2] px-[3px] leading-none whitespace-nowrap">{label}</button>;
}

function Dock() {
  return (
    <aside className="flex w-[534px] shrink-0 flex-col border-r-2 border-[#8d9299] bg-[#efefef] font-['Roboto',sans-serif] text-[11px] text-black">
      <Grip label="Close iLogic" />
      <div className="ml-[3px] flex h-[19px] w-[527px] items-center justify-between bg-[#a0a0a0] pr-1 pl-[5px] font-['Noto_Sans'] text-[12px] leading-none font-semibold text-white">
        <h2>iLogic</h2>
        <HelpTip label="iLogic help" />
      </div>
      <div className="mt-1 ml-[5px] flex h-[19px] items-end gap-px">
        <button className="-mb-px h-5 w-[45px] border border-b-0 border-[#8b8b93] bg-white pb-1 leading-none">Rules</button>
        <BrowserTab label="Forms" />
        <BrowserTab label="Global Forms" />
        <BrowserTab label="External Rules" />
      </div>
      <div className="mr-[7px] ml-[5px] border border-[#8b8b93] bg-white px-[5px] pt-[3px] pb-[5px]">
        <ul className="h-[56px] border border-[#8b8b93] pt-px pl-1">
          <li className="flex h-[18px] items-center gap-[5px]"><AsmIcon />108378 Components to be Added to AUTOS.iam</li>
          <li className="flex h-[18px] items-center">
            <Ic s={20} h={18} vb="0 0 20 18"><path d="M9.500 0v8.500H20" fill="none" stroke="#888" strokeDasharray="1 1" /></Ic>
            <span className="flex items-center gap-[3px]"><RuleIcon />Rule0</span>
          </li>
        </ul>
      </div>
      <div className="mt-[6px] h-px bg-black" />
      <Grip label="Close Model" />
      <div className="ml-[3px] flex h-[21px] w-[527px] items-center justify-between bg-[#a9a9a9] pr-1 pl-2 font-['Noto_Sans'] text-[12px] leading-none font-semibold text-white">
        <h2><button className="flex items-center gap-1 font-semibold">Model <BigCaret c="#fff" /></button></h2>
        <HelpTip label="Model help" />
      </div>
      <div className="flex h-[27px] items-center pl-1.5">
        <button aria-label="Filter"><Ic s={17}><path d="M1 1h14v2L9.500 9v6l-3-2V9L1 3z" fill="#ccc" stroke="#222" strokeWidth={1.2} /></Ic></button>
        <span className="mx-1.5 h-[18px] w-px bg-[#888]" />
        <button className="ml-[7px] flex items-center gap-0.5 text-[12px]">
          <Ic><path d="M1 3l5-2v4z" fill="#ccc" stroke="#222" /><path d="M8 14V9h6" stroke="#222" fill="none" /><path d="M11 5h4v4h-4z" fill="#d8726a" stroke="#401010" /><path d="M7 11h4v4H7z" fill="#eee" stroke="#222" /></Ic>
          Assembly View
          <span className="pl-2.5"><BigCaret /></span>
        </button>
        <button aria-label="Find" className="ml-2"><Ic><path d="M3 2h3v3h4V2h3l2 7v5h-5v-4H6v4H1V9z" fill="#111" /><path d="M3 9v3M12 9v3" stroke="#fff" /></Ic></button>
      </div>
      <div className="mb-7 ml-[3px] flex min-h-0 w-[527px] flex-1 flex-col border border-[#777] bg-white">
        <div className="flex min-h-0 flex-1">
          <ul className="min-w-0 flex-1 overflow-hidden">
            <li className="flex h-[18px] items-center gap-[3px] pl-[5px] font-['Noto_Sans'] leading-none font-bold"><AsmIcon />108378 Components to be Added to AUTOS.iam</li>
            {TREE.map((r, i) => <TreeRow key={i} row={r} />)}
          </ul>
          <div className="flex w-[17px] flex-col items-center bg-[#f0f0f0]">
            <button aria-label="Scroll up" className="flex h-[18px] items-center"><Ic s={6} h={4} vb="0 0 6 4"><path d="M0 4h6L3 0z" fill="#444" /></Ic></button>
            <div className="flex h-[210px] w-[14px] flex-col items-center justify-center gap-0.5 rounded-sm border border-[#979797] bg-gradient-to-r from-[#f4f4f4] to-[#cfcfd2]">
              <span className="h-px w-[7px] bg-[#555]" /><span className="h-px w-[7px] bg-[#555]" /><span className="h-px w-[7px] bg-[#555]" />
            </div>
            <span className="flex-1" />
            <button aria-label="Scroll down" className="flex h-[18px] items-center"><Caret /></button>
          </div>
        </div>
        <div className="flex h-4 items-center bg-[#f0f0f0] pr-[17px]">
          <button aria-label="Scroll left" className="flex w-[18px] justify-center"><Ic s={4} h={7} vb="0 0 4 7"><path d="M4 0v7L0 3.500z" fill="#333" /></Ic></button>
          <div className="flex h-[14px] w-[254px] items-center justify-center gap-0.5 rounded-sm border border-[#979797] bg-gradient-to-b from-[#f4f4f4] to-[#cfcfd2]">
            <span className="h-[7px] w-px bg-[#555]" /><span className="h-[7px] w-px bg-[#555]" /><span className="h-[7px] w-px bg-[#555]" />
          </div>
          <span className="flex-1" />
          <button aria-label="Scroll right" className="flex w-[18px] justify-center"><Ic s={4} h={7} vb="0 0 4 7"><path d="M0 0v7l4-3.500z" fill="#333" /></Ic></button>
        </div>
      </div>
    </aside>
  );
}

/* ---------- 3D model ---------- */

const GRAY = ["#515157", "#67676c", "#7a7a7f", "#8a8a8f", "#98989d"];
const LIGHT = ["#606064", "#808084", "#9a9a9e", "#b0b0b4"];
const SLATE = ["#303348", "#3e425b", "#4b506d", "#575d80"];
const YEL = ["#8f8c00", "#b9b500", "#d8d600", "#eceb14"];
const RED = ["#8c0000", "#b40000", "#d80000", "#f01010"];
const BLK = ["#151517", "#222224", "#2c2c2f"];
const BRASS = ["#7a4a08", "#a0660e", "#c08018"];
const BLU = ["#021c78", "#0428a0", "#0636c8", "#0a44e4"];

/* A shaded round bar: nested strokes whose lighter cores sit toward the upper left. */
function Tube({ d, w, c, cap = "butt" }: { d: string; w: number; c: string[]; cap?: "butt" | "round" }) {
  return (
    <g fill="none" strokeLinejoin="round" strokeLinecap={cap}>
      {c.map((col, i) => (
        <path key={i} d={d} stroke={col} strokeWidth={w * (1 - (i / c.length) * 0.95)} transform={`translate(${-0.02 * w * i} ${-0.04 * w * i})`} />
      ))}
    </g>
  );
}
const Bolt = ({ x, y, r = 11 }: { x: number; y: number; r?: number }) => (
  <g><circle cx={x} cy={y} r={r} fill="#6f6f73" stroke="#3c3c40" strokeWidth={2} /><circle cx={x - 2} cy={y - 3} r={r * 0.55} fill="#c9c9cd" /></g>
);
const Knob = ({ x, y }: { x: number; y: number }) => (
  <g transform={`translate(${x} ${y})`}>
    <path d="M-15 0h30v36h-30z" fill="#808084" />
    <path d="M-36 0l26 14 2 14 8 8 8-8 2-14 26-14v8l-24 16-12 16-12-16-24-16z" fill="#707074" />
    <path d="M0-26l9 17 28 9-26 9L0 28l-11-19-26-9 28-9z" fill="#bcbcc0" stroke="#88888c" strokeWidth={2} />
  </g>
);

function Skid() {
  return (
    <g transform="translate(960 700) scale(.3699 .33333)">
      {/* frame */}
      <path d="M48 705L1080 45l270 88 162 95L410 937z" fill="#bcbcbe" />
      <path d="M105 712L1075 85v60L150 725z" fill="#707076" />
      <path d="M1255 120l185 112-45 25-160-95z" fill="#77777c" />
      <path d="M1440 232l-28 18-20-30z" fill="#5f5f64" />
      <path d="M150 720L1075 130l160-5 175 125L408 892z" fill="#b7b7b9" />
      <path d="M150 722L408 892 1475 212" fill="none" stroke="#6d6d70" strokeWidth={2} strokeDasharray="5 5" />
      <path d="M408 905L1490 215" fill="none" stroke="#c9c9cb" strokeWidth={10} />
      <path d="M408 937L1500 232q12 0 12 8v125L410 1070z" fill="url(#face)" />
      <path d="M78 728l300 182v142L78 855z" fill="#727275" />
      <path d="M48 705l30 15v137l-30-10zM378 908l32 28v134l-32-20z" fill="#54545a" />
      <path d="M378 910l34-20M78 725l36-22M1438 238l36-28" stroke="#4c4c50" strokeWidth={4} />
      <path d="M48 852l30 5 300 194 32 19L1512 365" fill="none" stroke="#d0d0d0" strokeWidth={2} strokeDasharray="4 4" />
      {[[155, 745], [338, 863], [1404, 180]].map(([x, y]) => <ellipse key={x} cx={x} cy={y} rx={9} ry={7} fill="#606064" stroke="#333" strokeWidth={2} />)}
      <ellipse cx={229} cy={915} rx={12} ry={17} fill="#46464a" stroke="#222" strokeWidth={3} />
      <ellipse cx={232} cy={912} rx={7} ry={10} fill="#88888c" />
      <path d="M290 812l14-12 14 8-8 16-12-4z" fill="#68686c" stroke="#333" strokeWidth={2} />

      {/* vertical post behind motor */}
      <path d="M328 100h80v500h-80z" fill="#505058" />
      <path d="M350 100h30v500h-30z" fill="#65656c" />
      <path d="M238 105h90v18l-40 18z" fill="#66666a" />
      <path d="M435 105h55l-18 18h-20z" fill="#a00000" />

      {/* drain opening */}
      <ellipse cx={1010} cy={412} rx={75} ry={54} fill="#bcbcbe" stroke="#58585c" strokeWidth={2} strokeDasharray="6 4" />
      <path d="M935 412a75 54 0 0 1 80-54l-10 60q-50-14-70-6z" fill="#66666a" />
      <path d="M985 360c60-2 98 22 98 55-20 10-60-4-78-6z" fill="#98989c" />
      <path d="M915 340l42-35 56 35-50 40z" fill="#78787c" />
      <ellipse cx={974} cy={346} rx={7} ry={5} fill="#2c2c30" />
      <path d="M972 350v46" stroke="#33333a" strokeWidth={4} />
      <Tube d="M972 397v34" w={36} c={BLU} />
      <ellipse cx={972} cy={397} rx={18} ry={6} fill="#0a44e4" />

      {/* hose and drain piping */}
      <Tube d="M500 190L545 220Q580 245 625 225L690 180" w={34} c={LIGHT} />
      <Tube d="M488 186l56 28" w={46} c={LIGHT} />
      <Tube d="M650 205L760 145" w={50} c={GRAY} />
      <path d="M648 170l44 10 6 40-30 14-20-20z" fill="#a6a6aa" stroke="#66666a" strokeWidth={2} />
      <Tube d="M745 125Q790 95 835 140" w={36} c={LIGHT} />
      <Tube d="M780 185L840 220" w={44} c={LIGHT} />
      <Tube d="M855 0v70" w={42} c={BLK} />
      <Tube d="M855 15v95" w={38} c={GRAY} />
      <Tube d="M855 110v190" w={42} c={LIGHT} />
      <path d="M834 115h44M834 195h44M834 212h44M834 280h44" stroke="#45454a" strokeWidth={5} />
      <path d="M822 295l30-15 35 12-8 28-46 2z" fill="#dadadc" stroke="#77777a" strokeWidth={2} />

      {/* pump */}
      <path d="M804 310q50 30 100 0l30 28v95l-20 12-40-24-120 64-50-40V390l60-30 40 20z" fill="#0531b4" />
      <path d="M804 315q50 40 105-4v30q-50 34-105 0z" fill="#0a44e4" />
      <path d="M806 344q48 34 98-2v28q-50 30-98 0z" fill="#0428a0" />
      <path d="M770 415l100-65v30l-96 75z" fill="#0c48ee" />
      <path d="M800 450l76-44M806 466l70-42" stroke="#021c78" strokeWidth={5} />
      <path d="M902 345l32-8v90l-32 12z" fill="#0636c8" stroke="#021c78" strokeWidth={3} />
      <path d="M710 395q42 30 80 0v40q-40 26-80 0z" fill="#0a44e4" stroke="#021c78" strokeWidth={3} />
      <path d="M765 440l40 26-40 56z" fill="#0428a0" />
      <path d="M635 400l25-10 105 65v55l-20 75-20-8v-95l-88-62z" fill="#0636c8" stroke="#021c78" strokeWidth={3} />
      <path d="M600 460l50-36q80 20 84 70l-8 64-50 18-12-60z" fill="#083cda" />
      <path d="M610 458l44-28q40 8 60 34l-40 40z" fill="#1450f2" />
      <path d="M676 555l60-20v12l-60 28z" fill="#2d63ff" />
      <path d="M676 575l56-14v24l-56 18z" fill="#0428a0" />
      {[[646, 418], [731, 470], [762, 455], [776, 418], [884, 348], [730, 580]].map(([x, y]) => <circle key={`${x}-${y}`} cx={x} cy={y} r={5} fill="#c8d0e8" />)}
      <path d="M502 412l16-4 158 95v192l-14 2-160-118z" fill="#02209a" />
      <path d="M500 415l164 97v182l-164-120z" fill="#7b7b7f" />
      <path d="M502 412l16-4 158 95-12 10z" fill="#0a44e4" />
      <circle cx={512} cy={428} r={6} fill="#ddd" /><circle cx={655} cy={522} r={6} fill="#ddd" />

      {/* red suction line */}
      <Tube d="M705 95Q752 110 752 175" w={34} c={RED} />
      <path d="M738 160h28l10 70h-50z" fill="#d80000" />
      <path d="M688 255v35a64 34 0 0 0 128 0v-35z" fill="#a80000" />
      <ellipse cx={752} cy={258} rx={64} ry={36} fill="#e80404" />
      <path d="M732 180h38q0 55 22 85-42 20-82 0 22-30 22-85z" fill="#c40000" />
      <path d="M746 180h12v80h-12z" fill="#f42020" />
      {[[703, 248], [800, 248], [752, 284]].map(([x, y]) => <circle key={x} cx={x} cy={y} r={8} fill="#780000" />)}
      <path d="M694 303a60 26 0 0 0 118 0" fill="none" stroke="#ff5050" strokeWidth={2} strokeDasharray="5 4" />
      <Tube d="M752 325v65" w={46} c={RED} />
      <path d="M716 375q36 34 72 0" fill="none" stroke="#dfe6ff" strokeWidth={3} strokeDasharray="6 5" />

      {/* motor */}
      <path d="M450 790l130-60 50 20-150 95-35-25z" fill="#6a6a70" />
      <path d="M480 800l150-62v25L480 848z" fill="#46464c" />
      <path d="M340 700h30v60l-30 8z" fill="#505056" />
      <path d="M395 560q60-95 175-75 70 22 70 105v100l-170 80z" fill="#808084" />
      <path d="M560 487q80 20 80 105l-20 30q-10-70-90-122z" fill="#77777b" />
      {[0, 1, 2, 3, 4, 5, 6, 7, 8, 9].map((i) => (
        <path key={i} d={`M${385 + i * 12} ${568 + i * 13}Q${430 + i * 10} ${515 + i * 12} ${520 + i * 9} ${496 + i * 13}`} fill="none" stroke={i % 2 ? "#4b4b50" : "#a6a6aa"} strokeWidth={5} />
      ))}
      <ellipse cx={484} cy={512} rx={12} ry={20} fill="none" stroke="#6a6a6e" strokeWidth={6} />
      <ellipse cx={418} cy={672} rx={88} ry={112} fill="#7e7e82" transform="rotate(-14 418 672)" />
      <ellipse cx={400} cy={678} rx={82} ry={110} fill="url(#motor)" transform="rotate(-14 400 678)" />
      <path d="M523 635l70-38 47 25v110l-65 42-52-40z" fill="#606066" />
      <path d="M523 635l70-38 47 25-60 52z" fill="#98989c" />
      <path d="M523 640l20 8 32 125-52-36z" fill="#77777b" />
      <path d="M562 690h18v30l-22-6z" fill="#b5b5b9" />
      <ellipse cx={492} cy={762} rx={14} ry={10} fill="#a9a9ad" stroke="#444" strokeWidth={2} />

      {/* feet */}
      <path d="M1095 195l70-50 20 60-5 45-20 40-65-28z" fill="#98989c" />
      <path d="M1095 230l66 30v30l-66-30z" fill="#505056" />
      <path d="M1258 225l80-45 22 50-75 25z" fill="#b2b2b6" />
      <path d="M1285 258l75-22v45l-72 20z" fill="#46464c" />
      <ellipse cx={1154} cy={220} rx={11} ry={9} fill="#dcdcdf" /><ellipse cx={1303} cy={230} rx={11} ry={9} fill="#dcdcdf" />
      <path d="M1072 0h44v165l-44-12z" fill="#606066" />
      <path d="M1116 0h62v165h-62z" fill="#7a7a80" />
      <path d="M1075 15h18v72l-9 15-9-10z" fill="#c8c800" />
      <Tube d="M1235 125L1350 45" w={38} c={LIGHT} />
      <ellipse cx={1235} cy={40} rx={40} ry={34} fill="#8e8e92" stroke="#2a6a3a" strokeWidth={3} />
      <circle cx={1262} cy={26} r={10} fill="#cfcfd3" />
      <Tube d="M1270 -5l70 30" w={30} c={LIGHT} />
      <path d="M1308 0h40v170l-16 15-24-22z" fill="#7f7f85" />
      <path d="M1178 0h62v275l12 30-5 45-82-8 3-42 12-25z" fill="#77777d" />
      <path d="M1195 0h26v265h-26z" fill="#86868c" />
      <path d="M1165 340l80 5v20l-8-12-62-6-8 24z" fill="#404046" />
      <path d="M1180 275q40 60 68 10l-6 50-72-5z" fill="#8f8f95" />

      {/* loose ball valve */}
      <path d="M1140 540l14-6 14 14-16 14-12-6z" fill="#d7d7da" />
      <path d="M1150 548l28-10 42 32v22l-16 12-56-34z" fill="#c9810e" stroke="#7a4a08" strokeWidth={2} />
      <ellipse cx={1208} cy={588} rx={10} ry={15} fill="#a6834c" stroke="#7a4a08" strokeWidth={3} />
      <ellipse cx={1186} cy={542} rx={11} ry={9} fill="#99a" />
      <path d="M1196 545l20-6 50 38-6 12-18-2-44-32z" fill="#e6e200" />
    </g>
  );
}

function Tower() {
  return (
    <g transform="translate(1020 270) scale(.33333)">
      {/* rear posts and heater tubes */}
      <path d="M1008 95l12-7 75 44v1250h-87z" fill="#606067" />
      <path d="M1020 88l75 44v22l-75-40z" fill="#3e3e44" />
      <path d="M930 200h92v560l-52 27-40-22z" fill="#46464e" />
      <path d="M970 200h52v560l-52 27z" fill="#5a5a62" />
      <Tube d="M300 617L1035 190" w={116} c={GRAY} cap="round" />
      <Tube d="M560 648L1040 370" w={96} c={GRAY} cap="round" />
      <Tube d="M560 845L1030 574" w={96} c={GRAY} cap="round" />
      <Tube d="M560 1045L1030 768" w={108} c={SLATE} cap="round" />
      <path d="M1008 830h56v550h-56z" fill="#5f5f66" />
      <Tube d="M930 1400L1010 1350" w={40} c={LIGHT} />

      {/* hose */}
      <Tube d="M765 355Q706 370 705 430V485" w={34} c={LIGHT} />
      <Tube d="M706 475v175" w={46} c={GRAY} />
      <path d="M683 485h46M684 550h44M682 565h48M684 590h44M682 605h48" stroke="#4a4a4e" strokeWidth={5} />
      <Tube d="M706 650C706 860 768 960 769 1310" w={42} c={BLK} />
      <Tube d="M769 1305v80" w={42} c={GRAY} />

      {/* yellow header */}
      <path d="M840 80l62-24" stroke="#8f8c00" strokeWidth={3} strokeDasharray="4 6" />
      <Tube d="M268 415L842 82" w={30} c={YEL} />
      <path d="M370 325l22-10 22 36-22 14zM440 290l18-8 16 34-18 12zM822 82l16-12 12 22-14 14z" fill="#c4c100" />
      <Tube d="M385 345L470 297" w={46} c={YEL} />
      <path d="M398 280l22-12 22 12v20l-22 12-22-12zM410 262h22v20h-22z" fill="#b4b100" stroke="#7f7c00" strokeWidth={2} />
      <ellipse cx={555} cy={262} rx={42} ry={56} fill="#a8a500" transform="rotate(-12 555 262)" />
      <ellipse cx={530} cy={247} rx={42} ry={56} fill="#cfcd00" transform="rotate(-12 530 247)" />
      <path d="M475 280l55-44 14 32-60 40z" fill="#e9e812" />
      {[[500, 250], [548, 240], [548, 296], [506, 214]].map(([x, y]) => <circle key={`${x}-${y}`} cx={x} cy={y} r={8} fill="#dedc10" stroke="#7f7c00" strokeWidth={2} />)}
      <Tube d="M318 390v60" w={34} c={YEL} />
      <ellipse cx={317} cy={472} rx={60} ry={34} fill="#a8a500" />
      <ellipse cx={317} cy={458} rx={60} ry={32} fill="#dcda00" />
      <path d="M300 400h36l8 60h-52z" fill="#bdba00" />
      <Bolt x={271} y={453} /><Bolt x={361} y={453} /><Bolt x={316} y={478} />
      <Tube d="M215 430L275 412" w={44} c={YEL} />
      <ellipse cx={202} cy={443} rx={54} ry={50} fill="#a9a600" />
      <ellipse cx={190} cy={441} rx={42} ry={46} fill="#dedc00" />
      <ellipse cx={183} cy={442} rx={28} ry={32} fill="#e8e600" />
      <Tube d="M770 118L900 190Q945 212 945 262V430" w={34} c={YEL} />

      {/* relief valve */}
      <ellipse cx={805} cy={358} rx={38} ry={66} fill="#5a5a5f" transform="rotate(-28 805 358)" />
      <ellipse cx={795} cy={350} rx={46} ry={70} fill="none" stroke="#1f7a38" strokeWidth={4} transform="rotate(-32 795 350)" />
      <ellipse cx={772} cy={348} rx={44} ry={68} fill="#6e6e73" stroke="#4a4a4e" strokeWidth={2} transform="rotate(-28 772 348)" />
      <Tube d="M735 372L800 342" w={46} c={GRAY} />
      <Bolt x={740} y={313} r={13} /><Bolt x={793} y={341} /><Bolt x={791} y={400} r={13} />
      <ellipse cx={868} cy={420} rx={60} ry={24} fill="#1f6a34" />
      <ellipse cx={868} cy={408} rx={62} ry={26} fill="#b0b0b4" />
      <Tube d="M860 240v150" w={54} c={LIGHT} />
      <path d="M828 285h64l-4 18h-56zM815 300l40 5v28l-30 6z" fill="#a7a7ab" stroke="#66666a" strokeWidth={2} />
      <path d="M829 190a29 30 0 0 1 58 0l2 38-16 14h-28l-16-14z" fill="#c07a18" />
      <path d="M829 222l18 6h26l16-6v14l-16 8h-26l-18-8z" fill="#8a5408" />
      <path d="M840 176q8-12 20-10v56h-20z" fill="#d08c2c" />
      <Bolt x={858} y={388} r={14} /><Bolt x={908} y={358} r={13} />
      <Tube d="M862 455Q872 478 905 462L1010 400" w={36} c={YEL} />
      <Tube d="M945 395v35" w={34} c={YEL} />
      <ellipse cx={1032} cy={385} rx={38} ry={62} fill="#66666a" transform="rotate(-14 1032 385)" />
      <ellipse cx={1024} cy={390} rx={38} ry={60} fill="#208040" transform="rotate(-14 1024 390)" />
      <ellipse cx={1017} cy={392} rx={38} ry={60} fill="#d4d200" transform="rotate(-14 1017 392)" />
      <path d="M960 395l55-28 10 40-55 30z" fill="#e9e812" />
      <Bolt x={980} y={358} /><Bolt x={1022} y={384} /><Bolt x={1024} y={436} />
      <Tube d="M1055 360L1115 340" w={48} c={LIGHT} />

      {/* right side switch plate */}
      <path d="M1295 1000l103 22v225l-18 14-85-16z" fill="#808086" />
      <path d="M1292 1000l106 22" stroke="#d8d8da" strokeWidth={3} strokeDasharray="5 5" />
      <path d="M1338 1030h44v45l-20 8-24-8z" fill="#0c0c0c" />
      <path d="M1303 1140l22-22 70 14v112l-20 20-72-20z" fill="#9a9aa2" />
      <path d="M1303 1140l22-22 70 14-20 24z" fill="#d8d8dc" />
      <path d="M1376 1156l19-24v112l-19 20z" fill="#66666c" />
      <Tube d="M1350 1100v42" w={28} c={GRAY} />
      <path d="M1292 320V860L1357 920V1060" fill="none" stroke="#6d3412" strokeWidth={7} />
      <path d="M1294 862l62 56" stroke="#a85828" strokeWidth={4} />
      <path d="M1336 1060l16-14 16 10-2 22-20 4z" fill="#c89018" />
      <path d="M1334 1032q-8 10-7 40v212" fill="none" stroke="#a03812" strokeWidth={10} />

      {/* tank */}
      <path d="M1062 240h230v960q-20 60-115 72t-115-60z" fill="url(#tank)" />
      <path d="M1062 1070q20 34 115 36t116-70" fill="none" stroke="#e8e8ea" strokeWidth={3} strokeDasharray="8 5" />
      <path d="M1015 235q20 50 70 50 80 55 90 55t90-55q60 0 70-55v-30H1015z" fill="#8a8a8e" />
      <path d="M1020 260q20 30 65 30 70 40 95 40t85-42q50 4 68-38" fill="none" stroke="#e0e0e2" strokeWidth={3} strokeDasharray="7 5" />
      <ellipse cx={1176} cy={222} rx={150} ry={74} fill="#a9a9ad" />
      <ellipse cx={1176} cy={216} rx={132} ry={62} fill="#b4b4b8" />
      <Knob x={1176} y={118} />
      <Tube d="M1115 105v82" w={48} c={BRASS} />
      <ellipse cx={1115} cy={104} rx={28} ry={17} fill="#b57a1c" stroke="#6b4408" strokeWidth={2} />
      <ellipse cx={1112} cy={97} rx={10} ry={7} fill="#7d4e0a" />
      <path d="M1125 255v-40l103-60v40" fill="none" stroke="#66666a" strokeWidth={10} strokeLinejoin="round" />
      <path d="M1125 250v-36l103-60" fill="none" stroke="#b6b6ba" strokeWidth={4} />
      <circle cx={1238} cy={253} r={8} fill="#55555a" />
      <Knob x={1036} y={200} /><Knob x={1314} y={200} /><Knob x={1178} y={290} />

      {/* legs and regulator */}
      <path d="M1078 1120h50v260h-66v-60z" fill="#6d6d73" />
      <path d="M1128 1108l64-2v274h-64z" fill="#77777d" />
      <path d="M1145 1120h26v260h-26z" fill="#86868c" />
      <path d="M1128 1106q32 24 64 0" fill="none" stroke="#dadadc" strokeWidth={3} />
      <path d="M1192 1272h80l-2 108h-78z" fill="#336495" />
      <ellipse cx={1212} cy={1335} rx={26} ry={42} fill="#8e8e92" />
      <circle cx={1222} cy={1316} r={11} fill="#c9c9cd" />
      <Tube d="M1225 1285l52 30" w={32} c={LIGHT} />
      <path d="M1272 1255l43-70v195h-43z" fill="#7f7f85" />
      <path d="M1020 1075l30-30" stroke="#aab4c0" strokeWidth={6} />
      <path d="M1038 1062q16-10 32 0l8 46h-46z" fill="#0e0e10" />
      <path d="M1032 1108h46v58h-42z" fill="#c8581a" />
      <Tube d="M1060 1130Q1112 1120 1112 1185V1325" w={30} c={LIGHT} />
      <path d="M1062 1118l26-2v28l-26 6z" fill="#f07028" />
      <Tube d="M1055 1170v68" w={40} c={BLK} />
      <path d="M1036 1240h38v66l-20 6-18-8z" fill="#c08a18" />
      <path d="M1014 1300h22v80h-22z" fill="#c4c400" />
      <path d="M1016 1290l16-20 8 8-6 28h-18z" fill="#a9b3bd" />
    </g>
  );
}

function Scene() {
  return (
    <svg viewBox="534 138 1384 985" className="absolute inset-0 size-full" role="img" aria-label="Filter skid assembly model">
      <defs>
        <linearGradient id="face" x1="0" x2="1"><stop offset="0" stopColor="#69696c" /><stop offset="1" stopColor="#5c5c5f" /></linearGradient>
        <linearGradient id="tank" x1="0" x2="1">
          <stop offset="0" stopColor="#77777c" /><stop offset=".2" stopColor="#87878c" /><stop offset=".45" stopColor="#6c6c71" /><stop offset=".65" stopColor="#5a5a5f" /><stop offset="1" stopColor="#828287" />
        </linearGradient>
        <radialGradient id="motor" cx=".45" cy=".55"><stop offset="0" stopColor="#68686c" /><stop offset=".7" stopColor="#737377" /><stop offset="1" stopColor="#96969a" /></radialGradient>
        <linearGradient id="cube" x1="0" y1="0" x2="0" y2="1"><stop offset="0" stopColor="#9bb1cb" /><stop offset="1" stopColor="#7d9abb" /></linearGradient>
      </defs>
      <Skid />
      <Tower />
      {/* axis triad */}
      <g>
        <path d="M587.500 1071V1055" stroke="#17a017" /><path d="M582 1057l5.500-12 5.500 12z" fill="#0d9a0d" />
        <path d="M588 1071l12 8" stroke="#b00" /><path d="M596 1083l5-9 8 10z" fill="#b00808" />
        <path d="M587 1071l-12 8" stroke="#00b" /><path d="M579 1083l-5-9-8 10z" fill="#0808a8" />
        <g fontFamily="Noto Sans" fontSize={11}>
          <text x={584} y={1045} fill="#22c552">Y</text>
          <text x={609} y={1090} fill="#e02838">X</text>
          <text x={559} y={1090} fill="#2838e8">Z</text>
        </g>
      </g>
      {/* view cube */}
      <ellipse cx={1856} cy={1090} rx={36} ry={16} fill="#1d4470" opacity=".35" />
      <g stroke="#5d7593" strokeWidth={0.8} strokeLinejoin="round">
        <path d="M1820 1041l36-15 36 15-36 21z" fill="#91a9c6" />
        <path d="M1820 1041l36 21v41l-32-22z" fill="url(#cube)" />
        <path d="M1892 1041l-36 21v41l32-22z" fill="url(#cube)" />
      </g>
      <g fontFamily="Noto Sans" fontSize={9} fontWeight={600} fill="#5f7590">
        <text x={0} y={0} transform="translate(1826 1068) rotate(29)">FRONT</text>
        <text x={0} y={0} transform="translate(1864 1083) rotate(-30)">RIGHT</text>
        <text x={0} y={0} transform="translate(1847 1040) rotate(20)">TOP</text>
      </g>
    </svg>
  );
}

/* ---------- navigation bar and dialog ---------- */

function NavBar() {
  return (
    <div className="absolute right-[3px] bottom-[122px] flex h-[198px] w-[33px] flex-col items-center rounded border-2 border-[#2b5788] bg-[#6f8fb3]">
      <button aria-label="Close navigation bar" className="self-end pt-0.5 pr-0.5"><Ic s={9} h={9}><circle cx="8" cy="8" r="7.500" fill="#43607f" /><path d="M5 5l6 6M11 5l-6 6" stroke="#dfe6ee" strokeWidth={1.8} /></Ic></button>
      <button aria-label="Steering wheel" className="mt-2.5"><Ic s={24} vb="0 0 24 24"><path d="M12 1h10v10A11 11 0 1 1 12 1z" fill="#bcc7d3" stroke="#51687f" /><path d="M4 18q8 6 16 0l-2-2q-6 3-12 0z" fill="#4fae86" /><circle cx="12" cy="12" r="6.500" fill="#a9b8c8" stroke="#63798f" /><circle cx="12" cy="12" r="3.500" fill="none" stroke="#63798f" strokeDasharray="3 2" /></Ic></button>
      <span className="mt-2 flex h-2 items-center"><Caret c="#3f5f82" /></span>
      <span className="mt-1 h-px w-[27px] bg-[#3f6188]" />
      <button aria-label="Pan" className="mt-[5px]"><Ic s={18} vb="0 0 16 16"><path d="M4 15l-3-6 1-1 2 2-1-6 1.500-.3L6 8l0-6.500h1.500L8.500 8l1-6H11v6.500l1.500-4.500 1.500.5-1.500 8-1.500 2.500z" fill="#d5dde6" stroke="#43607f" strokeWidth={0.8} /></Ic></button>
      <button aria-label="Zoom" className="mt-1"><Ic s={17}><path d="M10 10l5 5" stroke="#43607f" strokeWidth={3} /><circle cx="6.500" cy="6.500" r="5.500" fill="#c4cfdb" stroke="#43607f" /><path d="M4 3.500h3.500l1.500 2v4H4z" fill="#fff" stroke="#43607f" strokeWidth={0.7} /></Ic></button>
      <span className="mt-1 flex h-2 items-center"><Caret c="#3f5f82" /></span>
      <button aria-label="Orbit" className="mt-1"><Ic s={17}><ellipse cx="8" cy="8" rx="7" ry="3" fill="none" stroke="#43607f" /><ellipse cx="8" cy="8" rx="3" ry="7" fill="none" stroke="#43607f" /><path d="M6 8h4M8 6v4" stroke="#c03050" /></Ic></button>
      <span className="mt-1 flex h-2 items-center"><Caret c="#3f5f82" /></span>
      <button aria-label="Look at" className="mt-1"><Ic s={17}><path d="M1 6h14v9H1z" fill="#c8c060" stroke="#43607f" /><path d="M4 9h8v3H4z" fill="#c7d3df" stroke="#43607f" /><path d="M3 5l4-3 1 2 5-2" fill="none" stroke="#d5dde6" /></Ic></button>
      <button aria-label="Customize navigation bar" className="mt-auto self-end pr-0.5 pb-0.5"><Ic s={9} h={9}><circle cx="8" cy="8" r="7.500" fill="#43607f" /><path d="M4 6h8M5 9h6l-3 3z" stroke="#dfe6ee" fill="#dfe6ee" /></Ic></button>
    </div>
  );
}

function ErrorDialog() {
  return (
    <div role="dialog" aria-label="Error in rule" className="absolute top-[298px] left-[156px] flex w-[540px] flex-col rounded-md border border-white bg-gradient-to-b from-[#e4e8ec] to-[#d6dce2] px-1.5 pb-1.5 font-['Roboto',sans-serif] text-[11px] text-black shadow-[0_2px_9px_3px_rgba(0,0,0,0.75)]">
      <div className="flex h-7 items-start justify-between">
        <h2 className="pt-[5px] text-[12px] leading-[17px]">Error in rule: Rule0, in document: 108378 Components to be Added to AUTOS.iam</h2>
        <button aria-label="Close dialog" className="flex h-5 w-[47px] shrink-0 items-center justify-center rounded-b border border-t-0 border-[#5c1c18] bg-gradient-to-b from-[#e9a79c] via-[#c03a28] to-[#d8705c]"><CloseX /></button>
      </div>
      <div className="flex flex-col border border-[#77797d] bg-[#efefef] px-0.5 pt-0.5">
        <div className="flex h-5 items-end">
          <button className="-mb-px h-[21px] w-[84px] border border-b-0 border-[#8b8b93] bg-white pb-0.5 leading-none">Error Message</button>
          <button className="h-[18px] w-[56px] border border-b-0 border-l-0 border-[#8b8b93] bg-gradient-to-b from-[#f2f2f2] to-[#d2d2d2] leading-none">More Info</button>
        </div>
        <div className="mr-[3px] flex border border-[#8b8b93] bg-white px-[5px] pt-[3px] pb-[5px]">
          <textarea
            aria-label="Error message"
            readOnly
            className="h-[190px] w-full resize-none border border-t-2 border-t-[#696969] border-r-[#e3e3e3] border-b-[#e3e3e3] border-l-[#696969] bg-white px-0 py-0.5 leading-[13px]"
            defaultValue={"Error in rule: Rule0, in document: 108378 Components to be Added to AUTOS.iam\n\nNot implemented (Exception from HRESULT: 0x80004001 (E_NOTIMPL))"}
          />
        </div>
        <div className="flex h-10 items-center justify-end pr-1.5">
          <button className="h-[21px] w-[73px] rounded-[3px] border border-[#2c7fb0] bg-gradient-to-b from-[#f2f2f2] to-[#cfcfcf] leading-none shadow-[inset_0_0_0_1px_#6fd0f2]">OK</button>
        </div>
      </div>
    </div>
  );
}

/* ---------- document tabs ---------- */

const DOCS = [
  { t: "My Home", w: "w-[71px]" },
  { t: "108261 Oil Stora...idw", w: "w-[135px]" },
  { t: "108261 Oil Stor...iam", w: "w-[130px]" },
  { t: "83500 Plate (top)...ipt", w: "w-[132px]" },
  { t: "107453 Rental B...iam", w: "w-[133px]" },
];
const ARRANGE: [string, string][] = [
  ["Cascade", "M1 1h9v9H1zM4 4h9v9H4zM6 6h9v9H6z"],
  ["Tile", "M1 1h6v6H1zM9 1h6v6H9zM1 9h6v6H1zM9 9h6v6H9z"],
  ["Tile horizontally", "M1 1h14v6H1zM1 9h14v6H1z"],
  ["Tile vertically", "M1 1h6v14H1zM9 1h6v14H9z"],
];

function DocTabs() {
  return (
    <div className="flex h-[22px] border-t-2 border-white bg-[#c6c6c6]">
      {ARRANGE.map(([n, d]) => (
        <button key={n} aria-label={n} className="flex w-5 shrink-0 items-center justify-center border border-[#555] bg-[#e2e2e2]"><Ic><path d={d} fill="#f4f4f4" stroke="#333" strokeWidth={1.2} /></Ic></button>
      ))}
      <button aria-label="Document list" className="flex w-[18px] shrink-0 justify-center border border-[#555] bg-[#dcdcdc] pt-1"><Ic s={8} h={5} vb="0 0 8 5"><path d="M0 5h8L4 0z" fill="#222" /></Ic></button>
      <div className="flex flex-1 items-start border-t border-[#777] bg-gradient-to-b from-[#d4d4d4] to-[#b2b2b2] text-[11px] text-[#222]">
        {DOCS.map((d) => (
          <button key={d.t} className={`h-[17px] shrink-0 overflow-hidden rounded-b-md border border-t-0 border-[#777] bg-gradient-to-b from-[#dcdcdc] to-[#c4c4c4] leading-[15px] whitespace-nowrap ${d.w}`}>{d.t}</button>
        ))}
        <button className="flex h-[17px] w-[147px] shrink-0 items-center justify-center gap-2 rounded-b-md border border-t-0 border-[#999] bg-white leading-[15px] whitespace-nowrap">
          108378 Compon...iam
          <Ic s={8} vb="0 0 8 8"><path d="M.5.5h7v7h-7z" fill="#fff" stroke="#888" /><path d="M2 2l4 4M6 2L2 6" stroke="#555" /></Ic>
        </button>
      </div>
    </div>
  );
}

/* ---------- taskbar ---------- */

const APPS: { n: string; on?: boolean; art: React.ReactNode }[] = [
  { n: "Internet Explorer", art: <><path d="M11 19A7 7 0 1 1 19 12H7a4 4 0 0 0 8 2h3a7 7 0 0 1-7 5zM7 10h8a4 4 0 0 0-8 0z" fill="#3fa0e8" stroke="#1d6bb0" strokeWidth=".6" /><path d="M2 20C-1 16 14 0 20 2c2 1 0 4-1 5 1-3-1-4-4-2C9 9 2 17 4 19c1 1 3 0 4-1-2 2-5 3-6 2z" fill="#f4c12e" /></> },
  { n: "Explorer", art: <><path d="M2 4h7l2 3h9v12H2z" fill="#f2dc8c" stroke="#b89a3c" /><path d="M5 12h12v8h-3v-5H8v5H5z" fill="#7fc0e8" stroke="#3b7fa8" /></> },
  { n: "Calculator", on: true, art: <><path d="M4 1h14v20H4z" fill="#8fbde0" stroke="#48749a" /><path d="M6 3h10v4H6z" fill="#eaf6ff" /><path d="M6 9h2v2H6zM10 9h2v2h-2zM14 9h2v2h-2zM6 13h2v2H6zM10 13h2v2h-2zM14 13h2v2h-2zM6 17h2v2H6zM10 17h2v2h-2zM14 17h2v2h-2z" fill="#fff" /></> },
  { n: "Media Player", art: <><path d="M3 1h16v20H3z" fill="#8fc0e4" stroke="#4b86b4" /><circle cx="11" cy="11" r="7" fill="#f08010" stroke="#fff" /><path d="M9 7l6 4-6 4z" fill="#fff" /></> },
  { n: "Excel", art: <><path d="M2 3h14l3 3v14H2z" fill="#fff" stroke="#2f7a3c" strokeWidth="2" /><path d="M6 8l8 9M14 8l-8 9" stroke="#2f7a3c" strokeWidth="2.500" /></> },
  { n: "Chrome", on: true, art: <><circle cx="11" cy="11" r="9" fill="#f4c20d" /><path d="M3 6.500A9 9 0 0 1 20 9h-9z" fill="#db3a2a" /><path d="M3 6.500A9 9 0 0 0 10 20l4-7-7-2z" fill="#2f9e4c" /><circle cx="11" cy="11" r="4.500" fill="#fff" /><circle cx="11" cy="11" r="3.400" fill="#3f7fe8" /></> },
  { n: "SolidWorks", art: <><path d="M2 5l9-3 9 3v13l-9 3-9-3z" fill="#d01c24" stroke="#800" /><path d="M11 7v14l9-3V5z" fill="#a81018" /><path d="M8.500 9.500q-4-1-4 1t4 2-4 2.500M12.500 9l1 8 2-4 2 3 1-9" fill="none" stroke="#fff" strokeWidth="1.600" /></> },
  { n: "Word", on: true, art: <><path d="M3 3h14l2 2v15H3z" fill="#fff" stroke="#4a6cb4" strokeWidth="1.500" /><path d="M5 8l3 9 3-8 3 8 3-9" fill="none" stroke="#2c4f9c" strokeWidth="2.200" /></> },
  { n: "Remote", art: <><path d="M5 2h14v18H8z" fill="#3f7fc8" stroke="#111" /><circle cx="7" cy="9" r="4" fill="#e09050" /><path d="M2 20q0-8 6-7t5 7z" fill="#c03018" stroke="#300" /><path d="M11 6h5v3M16 16h-4v-3" stroke="#fff" strokeWidth="2" fill="none" /></> },
  { n: "Earth", art: <><circle cx="11" cy="11" r="9" fill="#2f56b8" /><path d="M3 7q8-2 16 6M4 11q8-1 12 7" fill="none" stroke="#e8f0ff" strokeWidth="2" /></> },
  { n: "Vault", on: true, art: <><path d="M2 2h18v18H2z" fill="#9ccfcc" /><path d="M4 4h5l2 6 2-6h5l-5 14H9z" fill="#0c6a68" /></> },
  { n: "Inventor", on: true, art: <><path d="M2 2h18v18H2z" fill="#f4b878" /><path d="M6 4h10v4h-3v6h3v4H6v-4h3V8H6z" fill="#b85a14" /></> },
  { n: "AutoCAD", art: <><path d="M2 2h18v18H2z" fill="#f0a8a8" /><path d="M9 3h4l5 15h-4l-3-4-3 4H4z" fill="#b81018" /></> },
];

const TRAY: { n: string; art: React.ReactNode }[] = [
  { n: "Dropbox", art: <><path d="M4 1l4 2.500L4 6 .5 3.500zM12 1l3.500 2.500L12 6 8 3.500zM4 6l4 2.500L4 11 .5 8.500zM12 6l3.500 2.500L12 11 8 8.500z" fill="#fff" stroke="#555" strokeWidth=".6" /><circle cx="11" cy="11.500" r="4" fill="#2f9a3c" /><path d="M9 11.500l1.500 1.500 2.500-3" stroke="#fff" fill="none" strokeWidth="1.300" /></> },
  { n: "Action Center", art: <><path d="M2 1v14" stroke="#fff" strokeWidth="2" /><path d="M3 2h10v7H3z" fill="#fff" stroke="#555" strokeWidth=".5" /><circle cx="11.500" cy="11" r="4" fill="#d02828" /><path d="M10 9.500l3 3M13 9.500l-3 3" stroke="#fff" strokeWidth="1.300" /></> },
  { n: "Network", art: <path d="M5 4h10v8H5zM7 14h6M2 1v3h3V1M3.500 4v10h3" fill="none" stroke="#fff" strokeWidth="1.500" /> },
  { n: "Volume", art: <><path d="M2 6h3l4-4v12l-4-4H2z" fill="#fff" stroke="#555" strokeWidth=".6" /><path d="M11 5q2 3 0 6M13 3q4 5 0 10" fill="none" stroke="#fff" /></> },
  { n: "Drive", art: <><path d="M5.500 2h5l5 9h-5z" fill="#f4c430" /><path d="M5.500 2L8 6.500 3 15 .5 11z" fill="#2a9d58" /><path d="M3 15l2.500-4h10L13 15z" fill="#3d78e0" /></> },
];

function Taskbar() {
  return (
    <footer className="flex h-[30px] shrink-0 items-stretch border-t border-[#555] bg-[#d8dde4] bg-[linear-gradient(to_right,#8f9498_0px,#9ea3a7_40px,#d4d9e0_80px,#d8dde4_80%,#cfd5db_86%,#a3a8ae_90%,#a3a8ae_100%)] font-['Noto_Sans',sans-serif]">
      <button aria-label="Start" className="-mt-[5px] ml-2 flex w-9 shrink-0">
        <Ic s={36} vb="0 0 36 36">
          <defs><radialGradient id="orb" cx=".5" cy=".9" r=".9"><stop offset="0" stopColor="#3fd8ff" /><stop offset=".5" stopColor="#1c5f96" /><stop offset="1" stopColor="#8aa6bd" /></radialGradient></defs>
          <circle cx="18" cy="18" r="17" fill="url(#orb)" stroke="#23384c" />
          <path d="M9 11q5-3 8-1l-2 7q-3-2-8 0z" fill="#f0582c" /><path d="M19 11q4 2 9 0l-2 7q-5 2-9-.5z" fill="#8cc63f" />
          <path d="M7 19q5-2 8 0l-2 7q-4-2-8 0z" fill="#3fa9f5" /><path d="M16.500 20q4 2 9 0l-2 7q-5 2-9 0z" fill="#fcd116" />
        </Ic>
      </button>
      <div className="ml-[15px] flex gap-[3px]">
        {APPS.map((a) => (
          <button key={a.n} aria-label={a.n} className={a.on ? "flex w-[43px] items-center justify-center rounded-sm border border-[#555] bg-gradient-to-br from-[#f4f6f8] to-[#c6ccd4]" : "flex w-[43px] items-center justify-center"}>
            <Ic s={18} vb="0 0 22 22">{a.art}</Ic>
          </button>
        ))}
      </div>
      <span className="flex-1" />
      <div className="flex items-center gap-2">
        <button aria-label="Show hidden icons" className="mr-[9px]"><Ic s={9} h={5} vb="0 0 9 5"><path d="M0 5h9L4.500 0z" fill="#fff" stroke="#555" strokeWidth={0.5} /></Ic></button>
        {TRAY.map((t) => <button key={t.n} aria-label={t.n}><Ic>{t.art}</Ic></button>)}
      </div>
      <time className="flex w-[80px] items-center justify-center text-[12px] whitespace-nowrap text-white">4:20 PM</time>
      <button aria-label="Show desktop" className="w-[14px] border border-[#666] bg-gradient-to-br from-[#d0d4d8] to-[#7c838a]" />
    </footer>
  );
}

export default function App() {
  return (
    <div className="flex h-screen flex-col overflow-hidden bg-[#efefef]">
      <Top />
      <main className="flex min-h-0 flex-1">
        <Dock />
        <div className="flex min-w-0 flex-1 flex-col font-['Noto_Sans',sans-serif]">
          <div className="relative min-h-0 flex-1 overflow-hidden border-r-2 border-white bg-[#336495]">
            <Scene />
            <div className="absolute top-[7px] right-0.5 flex items-center gap-2">
              <button aria-label="Minimize document"><Ic s={12}><path d="M1 10h14v4H1z" fill="#fff" stroke="#444" /></Ic></button>
              <button aria-label="Restore document"><Ic s={12}><path d="M5 1h10v11H5zM1 4h10v11H1z" fill="#fff" stroke="#444" strokeWidth={1.5} /><path d="M4 8h4v4H4z" fill="#336495" /></Ic></button>
              <button aria-label="Close document"><CloseX /></button>
            </div>
            <NavBar />
            <ErrorDialog />
          </div>
          <DocTabs />
        </div>
      </main>
      <div className="flex h-[25px] shrink-0 items-center justify-end border-t border-[#999] bg-gradient-to-b from-white to-[#adadad] font-['Noto_Sans',sans-serif] text-[11px] text-black">
        <span className="px-3">384</span>
        <span className="h-5 w-px bg-[#bbb]" />
        <span className="w-[34px] text-center">512</span>
        <span className="w-1" />
      </div>
      <Taskbar />
    </div>
  );
}
